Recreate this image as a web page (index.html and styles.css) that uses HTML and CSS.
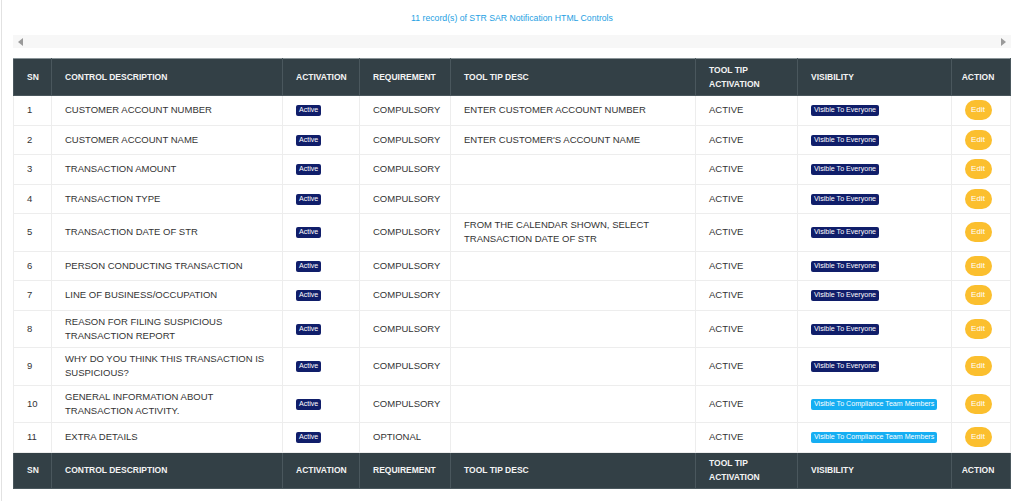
FILE: index.html
```html
<!DOCTYPE html>
<html>
<head>
<meta charset="utf-8">
<link rel="stylesheet" href="styles.css">
</head>
<body>
<div class="page">
  <div class="caption">11 record(s) of STR SAR Notification HTML Controls</div>
  <div class="scrollbar">
    <svg class="arrow" width="6" height="8" viewBox="0 0 6 8"><path d="M5 0 L0 4 L5 8 Z" fill="#9a9a9a"/></svg>
    <svg class="arrow" width="6" height="8" viewBox="0 0 6 8"><path d="M1 0 L6 4 L1 8 Z" fill="#9a9a9a"/></svg>
  </div>
  <table class="grid">
    <colgroup>
      <col class="c-sn"><col class="c-desc"><col class="c-act"><col class="c-req"><col class="c-tip"><col class="c-tipact"><col class="c-vis"><col class="c-action">
    </colgroup>
    <thead>
      <tr>
        <th>SN</th><th>CONTROL DESCRIPTION</th><th>ACTIVATION</th><th>REQUIREMENT</th><th>TOOL TIP DESC</th><th>TOOL TIP<br>ACTIVATION</th><th>VISIBILITY</th><th class="center">ACTION</th>
      </tr>
    </thead>
    <tbody>
      <tr><td>1</td><td>CUSTOMER ACCOUNT NUMBER</td><td><span class="badge navy">Active</span></td><td>COMPULSORY</td><td>ENTER CUSTOMER ACCOUNT NUMBER</td><td>ACTIVE</td><td><span class="badge navy">Visible To Everyone</span></td><td class="center"><span class="edit">Edit</span></td></tr>
      <tr><td>2</td><td>CUSTOMER ACCOUNT NAME</td><td><span class="badge navy">Active</span></td><td>COMPULSORY</td><td>ENTER CUSTOMER'S ACCOUNT NAME</td><td>ACTIVE</td><td><span class="badge navy">Visible To Everyone</span></td><td class="center"><span class="edit">Edit</span></td></tr>
      <tr><td>3</td><td>TRANSACTION AMOUNT</td><td><span class="badge navy">Active</span></td><td>COMPULSORY</td><td></td><td>ACTIVE</td><td><span class="badge navy">Visible To Everyone</span></td><td class="center"><span class="edit">Edit</span></td></tr>
      <tr><td>4</td><td>TRANSACTION TYPE</td><td><span class="badge navy">Active</span></td><td>COMPULSORY</td><td></td><td>ACTIVE</td><td><span class="badge navy">Visible To Everyone</span></td><td class="center"><span class="edit">Edit</span></td></tr>
      <tr><td>5</td><td>TRANSACTION DATE OF STR</td><td><span class="badge navy">Active</span></td><td>COMPULSORY</td><td>FROM THE CALENDAR SHOWN, SELECT<br>TRANSACTION DATE OF STR</td><td>ACTIVE</td><td><span class="badge navy">Visible To Everyone</span></td><td class="center"><span class="edit">Edit</span></td></tr>
      <tr><td>6</td><td>PERSON CONDUCTING TRANSACTION</td><td><span class="badge navy">Active</span></td><td>COMPULSORY</td><td></td><td>ACTIVE</td><td><span class="badge navy">Visible To Everyone</span></td><td class="center"><span class="edit">Edit</span></td></tr>
      <tr><td>7</td><td>LINE OF BUSINESS/OCCUPATION</td><td><span class="badge navy">Active</span></td><td>COMPULSORY</td><td></td><td>ACTIVE</td><td><span class="badge navy">Visible To Everyone</span></td><td class="center"><span class="edit">Edit</span></td></tr>
      <tr><td>8</td><td>REASON FOR FILING SUSPICIOUS<br>TRANSACTION REPORT</td><td><span class="badge navy">Active</span></td><td>COMPULSORY</td><td></td><td>ACTIVE</td><td><span class="badge navy">Visible To Everyone</span></td><td class="center"><span class="edit">Edit</span></td></tr>
      <tr><td>9</td><td>WHY DO YOU THINK THIS TRANSACTION IS<br>SUSPICIOUS?</td><td><span class="badge navy">Active</span></td><td>COMPULSORY</td><td></td><td>ACTIVE</td><td><span class="badge navy">Visible To Everyone</span></td><td class="center"><span class="edit">Edit</span></td></tr>
      <tr><td>10</td><td>GENERAL INFORMATION ABOUT<br>TRANSACTION ACTIVITY.</td><td><span class="badge navy">Active</span></td><td>COMPULSORY</td><td></td><td>ACTIVE</td><td><span class="badge cyan">Visible To Compliance Team Members</span></td><td class="center"><span class="edit">Edit</span></td></tr>
      <tr><td>11</td><td>EXTRA DETAILS</td><td><span class="badge navy">Active</span></td><td>OPTIONAL</td><td></td><td>ACTIVE</td><td><span class="badge cyan">Visible To Compliance Team Members</span></td><td class="center"><span class="edit">Edit</span></td></tr>
    </tbody>
    <tfoot>
      <tr>
        <th>SN</th><th>CONTROL DESCRIPTION</th><th>ACTIVATION</th><th>REQUIREMENT</th><th>TOOL TIP DESC</th><th>TOOL TIP<br>ACTIVATION</th><th>VISIBILITY</th><th class="center">ACTION</th>
      </tr>
    </tfoot>
  </table>
</div>
</body>
</html>
```
FILE: styles.css
```css
html, body {
  margin: 0;
  padding: 0;
  background: #ffffff;
}
body {
  font-family: "Liberation Sans", Arial, sans-serif;
  color: #333333;
}
.page {
  margin-left: 1px;
  border-left: 1px solid #e2e2e2;
  min-height: 501px;
  box-sizing: border-box;
  padding: 12px 12px 0 11px;
}
.caption {
  text-align: center;
  font-size: 8.7px;
  color: #1e9fe3;
  line-height: 12px;
}
.scrollbar {
  margin-top: 11px;
  height: 13px;
  background: #f7f7f7;
  display: flex;
  align-items: center;
  justify-content: space-between;
  padding: 0 5px;
}
.arrow { display: block; }
.grid {
  margin-top: 10px;
  width: 997px;
  border-collapse: collapse;
  table-layout: fixed;
  font-size: 9.5px;
}
.c-sn { width: 38px; }
.c-desc { width: 231px; }
.c-act { width: 77px; }
.c-req { width: 91px; }
.c-tip { width: 245px; }
.c-tipact { width: 102px; }
.c-vis { width: 154px; }
.c-action { width: 59px; }
th {
  background: #334046;
  color: #f4f4f4;
  font-weight: bold;
  font-size: 8.5px;
  text-align: left;
  padding: 4px 13px;
  line-height: 14px;
  height: 26px;
  border: 1px solid #4a575d;
  border-top-color: #8a9498;
}
tfoot th {
  height: 25px;
  padding-top: 3.5px;
  padding-bottom: 3.5px;
}
td {
  padding: 4.25px 13px;
  line-height: 14px;
  border: 1px solid #ededed;
  vertical-align: middle;
  color: #333;
}
th.center, td.center { text-align: center; padding-left: 0; padding-right: 6px; }
.badge {
  display: inline-block;
  font-size: 7.1px;
  line-height: 11px;
  padding: 0 3px;
  border-radius: 2px;
  color: #fff;
  vertical-align: middle;
  white-space: nowrap;
}
.navy { background: #101e6a; }
.cyan { background: #16aef2; }
.edit {
  display: inline-block;
  width: 27px;
  height: 20px;
  line-height: 20px;
  border-radius: 10px;
  background: #fbbf2e;
  color: #fff;
  font-size: 8px;
  text-align: center;
  vertical-align: middle;
}
```
